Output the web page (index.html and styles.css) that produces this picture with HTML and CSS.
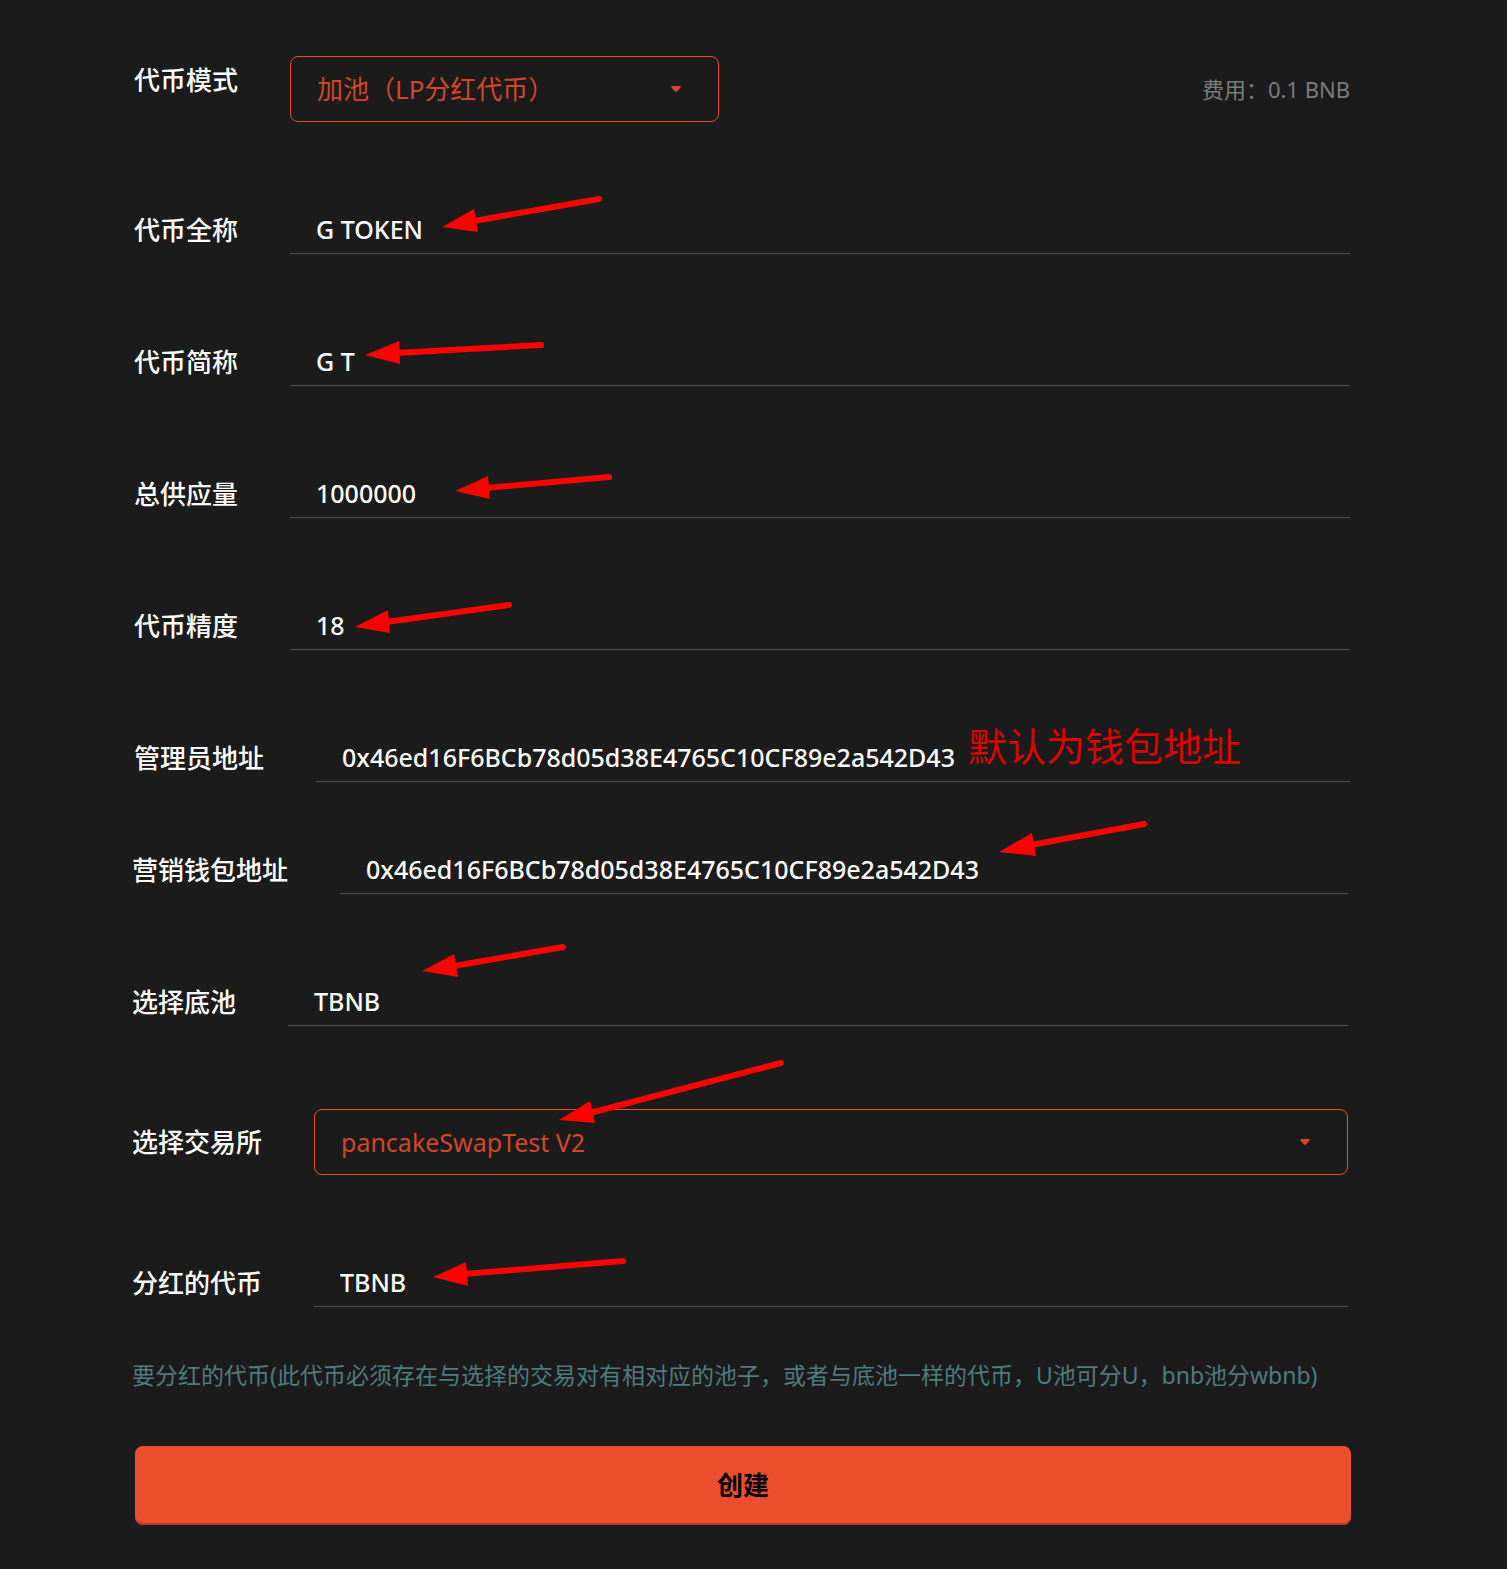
FILE: index.html
```html
<!DOCTYPE html>
<html lang="zh-CN">
<head>
<meta charset="utf-8">
<title>创建代币</title>
<link rel="stylesheet" href="styles.css">
</head>
<body>
<form class="form">
  <div class="group">
    <div class="row row-top">
      <label class="label" for="mode">代币模式</label>
      <div class="select select-mode">
        <select id="mode"><option>加池（LP分红代币）</option></select>
        <svg class="caret" viewBox="0 0 12 8" aria-hidden="true"><path d="M2 1h8q1.500 .5 .5 1.800L7 6.600q-1 .8-2 0L1.500 2.800Q.5 1.500 2 1z"/></svg>
      </div>
      <span class="fee">费用：0.1 BNB</span>
    </div>
    <div class="row">
      <label class="label" for="name">代币全称</label>
      <input class="input" id="name" type="text" value="G TOKEN">
    </div>
    <div class="row">
      <label class="label" for="symbol">代币简称</label>
      <input class="input" id="symbol" type="text" value="G T">
    </div>
    <div class="row">
      <label class="label" for="supply">总供应量</label>
      <input class="input" id="supply" type="text" value="1000000">
    </div>
    <div class="row">
      <label class="label" for="decimals">代币精度</label>
      <input class="input" id="decimals" type="text" value="18">
    </div>
    <div class="row">
      <label class="label" for="owner">管理员地址</label>
      <input class="input" id="owner" type="text" value="0x46ed16F6BCb78d05d38E4765C10CF89e2a542D43">
    </div>
  </div>
  <div class="group group-pool">
    <div class="row">
      <label class="label" for="wallet">营销钱包地址</label>
      <input class="input" id="wallet" type="text" value="0x46ed16F6BCb78d05d38E4765C10CF89e2a542D43">
    </div>
    <div class="row">
      <label class="label" for="pool">选择底池</label>
      <input class="input" id="pool" type="text" value="TBNB">
    </div>
    <div class="row">
      <label class="label" for="exchange">选择交易所</label>
      <div class="select">
        <select id="exchange"><option>pancakeSwapTest V2</option></select>
        <svg class="caret" viewBox="0 0 12 8" aria-hidden="true"><path d="M2 1h8q1.500 .5 .5 1.800L7 6.600q-1 .8-2 0L1.500 2.800Q.5 1.500 2 1z"/></svg>
      </div>
    </div>
    <div class="row">
      <label class="label" for="reward">分红的代币</label>
      <input class="input" id="reward" type="text" value="TBNB">
    </div>
  </div>
  <p class="hint">要分红的代币(此代币必须存在与选择的交易对有相对应的池子，或者与底池一样的代币，U池可分U，bnb池分wbnb)</p>
  <button class="submit" type="button">创建</button>
</form>
<svg class="arrows" width="1200" height="1300" aria-hidden="true">
  <path class="shaft" d="M599 199L474 221M541 345L396 353M609 477L486 488M509 605L386 622M1144 824L1031 845M563 947L454 966M781 1063L590 1113M623 1261L464 1274"/>
  <path class="head" d="M442 227L474 209L478 232zM365 355L399 341L400 364zM455 491L488 476L490 499zM355 627L388 610L390 633zM999 852L1032 833L1036 856zM422 971L454 954L458 977zM559 1120L590 1101L595 1123zM433 1277L466 1262L468 1286z"/>
</svg>
<span class="note">默认为钱包地址</span>
</body>
</html>
```
FILE: styles.css
```css
* {
  box-sizing: border-box;
}

body {
  position: relative;
  margin: 0;
  background: #1b1b1b;
  color: #fff;
  font-family: "Noto Sans", "Noto Sans CJK SC", sans-serif;
  font-size: 26px;
}

.form {
  display: flex;
  flex-direction: column;
  padding: 56px 0 44px;
}

.group {
  display: flex;
  flex-direction: column;
  gap: 83px;
  padding: 0 157px 0 134px;
}

.group-pool {
  margin-top: 63px;
  padding: 0 159px 0 132px;
}

.row {
  display: flex;
  align-items: center;
  gap: 52px;
}

.row-top {
  align-items: flex-start;
}

.label {
  flex: none;
  padding-bottom: 3px;
  line-height: 45px;
  font-family: "Noto Sans CJK SC", sans-serif;
  font-weight: 500;
}

.input {
  flex: 1;
  min-width: 0;
  height: 49px;
  padding: 0 26px;
  border: 0;
  border-bottom: 1px solid #515151;
  outline: 0;
  background: transparent;
  color: #fff;
  font-family: inherit;
  font-size: 25px;
  font-weight: 500;
}

.select {
  flex: 1;
  display: grid;
  align-items: center;
  font-size: 25px;
}

.select-mode {
  flex: 0 1 429px;
  font-size: 26px;
}

.select select {
  grid-area: 1 / 1;
  width: 100%;
  height: 66px;
  padding: 0 26px;
  appearance: none;
  border: 1px solid #ea4e2d;
  border-radius: 8px;
  outline: 0;
  background: transparent;
  color: #d1472a;
  font-family: inherit;
  font-size: inherit;
}

.caret {
  grid-area: 1 / 1;
  justify-self: end;
  width: 12px;
  height: 8px;
  margin-right: 37px;
  fill: #d1472a;
  pointer-events: none;
}

.fee {
  margin-left: auto;
  color: #7c7c7c;
  font-size: 22px;
  line-height: 66px;
}

.hint {
  margin: 50px 132px 0;
  color: #4d7d7d;
  font-size: 23px;
  line-height: 36px;
}

.submit {
  height: 79px;
  margin: 53px 156px 0 135px;
  padding: 0 0 3px;
  border: 0;
  border-radius: 8px;
  background: #eb4e2c;
  box-shadow: inset 0 -2px #b23e27;
  color: #000;
  font-family: inherit;
  font-size: 26px;
  font-weight: 700;
}

.arrows {
  position: absolute;
  top: 0;
  left: 0;
  pointer-events: none;
}

.shaft {
  fill: none;
  stroke: #f00;
  stroke-width: 6px;
  stroke-linecap: round;
}

.head {
  fill: #f00;
}

.note {
  position: absolute;
  top: 718px;
  left: 968px;
  color: #d90505;
  font-size: 39px;
  line-height: 56px;
}
```
